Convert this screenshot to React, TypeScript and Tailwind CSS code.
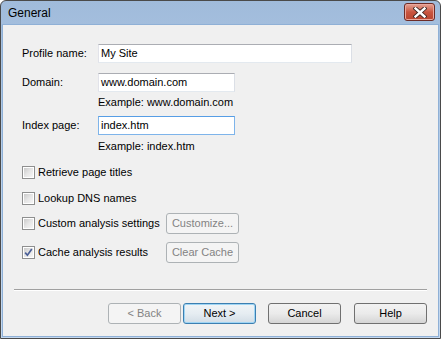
import { type ReactNode } from 'react';

const font = "font-['Liberation_Sans',Arial,sans-serif]";

function TextBox({ value, width, focused }: { value: string; width: number; focused?: boolean }) {
  return (
    <div
      style={{ width }}
      className={`flex h-[19px] items-center bg-white px-[2px] text-[11px] text-black ${
        focused
          ? 'border border-[#7eb4ea] border-t-[#569de5]'
          : 'border border-[#e3e9ef] border-t-[#abadb3] border-l-[#e2e3ea] border-r-[#dbdfe6]'
      }`}
    >
      {value}
    </div>
  );
}

function Field({ label, children }: { label: string; children: ReactNode }) {
  return (
    <div className="flex items-center">
      <span className="w-[76px] text-[11px] text-black">{label}</span>
      {children}
    </div>
  );
}

function CheckBox({ label, checked }: { label: string; checked?: boolean }) {
  return (
    <div className="flex w-[144px] items-center gap-[3px]">
      <span className="flex h-[13px] w-[13px] items-center justify-center border border-[#8e8f8f] bg-white p-[1px]">
        <span className="relative flex h-full w-full items-center justify-center bg-linear-to-br from-[#cbcbcb] via-[#e6e6e6] to-[#f6f6f6]">
          {checked && (
            <svg width="9" height="9" viewBox="0 0 9 9" className="absolute">
              <path d="M1.2 4.6 L3.4 7.2 L7.8 1" fill="none" stroke="#4a5f97" strokeWidth="1.7" />
            </svg>
          )}
        </span>
      </span>
      <span className="text-[11px] text-black">{label}</span>
    </div>
  );
}

function Button({ children, disabled, primary }: { children: ReactNode; disabled?: boolean; primary?: boolean }) {
  let cls = 'border-[#707070] bg-linear-to-b from-[#f2f2f2] via-[#ebebeb] to-[#d5d5d5] text-black';
  if (disabled) cls = 'border-[#adb2b5] bg-[#f4f4f4] text-[#838383]';
  if (primary)
    cls =
      'border-[#3c7fb1] bg-linear-to-b from-[#f0f4f7] via-[#e6edf2] to-[#d2dde6] text-black shadow-[inset_0_0_0_1px_#9fd5f4]';
  return (
    <div className={`flex h-[21px] w-[73px] items-center justify-center rounded-[3px] border text-[11px] ${cls}`}>
      {children}
    </div>
  );
}

export default function App() {
  return (
    <div className={`${font} h-[339px] w-[441px] bg-white`}>
      <div className="flex h-full w-full flex-col rounded-t-[6px] border border-[#4a4a4a] bg-linear-to-b from-[#a0bbdb] via-[#b9d0ea] to-[#c4d8ef] px-[1px] pb-[1px]">
        <div className="flex h-[23px] items-center justify-between pl-[6px] pr-[4px]">
          <span className="text-[12px] text-black">General</span>
          <div className="mt-[-1px] flex h-[18px] w-[31px] items-center justify-center rounded-[3px] border border-[#6d2b26] bg-linear-to-b from-[#e3a397] via-[#c9553f] to-[#b8442f] shadow-[inset_0_0_0_1px_#eaa89d]">
            <svg width="14" height="11" viewBox="0 0 14 11">
              <path d="M2.5 1.5 L11.5 9.5 M11.5 1.5 L2.5 9.5" stroke="#3a2420" strokeWidth="4.2" strokeLinecap="square" />
              <path d="M2.5 1.5 L11.5 9.5 M11.5 1.5 L2.5 9.5" stroke="#ffffff" strokeWidth="2.4" strokeLinecap="square" />
            </svg>
          </div>
        </div>
        <div className="flex flex-1 flex-col border border-[#8fb0d6] bg-[#f0f0f0] pt-[19px]">
          <div className="flex flex-col pl-[19px]">
            <Field label="Profile name:">
              <TextBox value="My Site" width={254} />
            </Field>
            <div className="mt-[10px]">
              <Field label="Domain:">
                <TextBox value="www.domain.com" width={137} />
              </Field>
            </div>
            <p className="mt-[4px] h-[13px] pl-[76px] text-[11px] leading-[13px] text-black">Example: www.domain.com</p>
            <div className="mt-[7px]">
              <Field label="Index page:">
                <TextBox value="index.htm" width={137} focused />
              </Field>
            </div>
            <p className="mt-[5px] h-[13px] pl-[76px] text-[11px] leading-[13px] text-black">Example: index.htm</p>

            <div className="mt-[13px] flex h-[13px] items-center">
              <CheckBox label="Retrieve page titles" />
            </div>
            <div className="mt-[13px] flex h-[13px] items-center">
              <CheckBox label="Lookup DNS names" />
            </div>
            <div className="mt-[8px] flex h-[21px] items-center">
              <CheckBox label="Custom analysis settings" />
              <Button disabled>Customize...</Button>
            </div>
            <div className="mt-[8px] flex h-[21px] items-center">
              <CheckBox label="Cache analysis results" checked />
              <Button disabled>Clear Cache</Button>
            </div>
          </div>

          <div className="mx-[11px] mt-[26px] border-t border-b border-t-[#a0a0a0] border-b-white" />

          <div className="mt-[12px] flex justify-end pr-[11px]">
            <Button disabled>&lt; Back</Button>
            <div className="ml-[2px]">
              <Button primary>Next &gt;</Button>
            </div>
            <div className="ml-[12px]">
              <Button>Cancel</Button>
            </div>
            <div className="ml-[13px]">
              <Button>Help</Button>
            </div>
          </div>
        </div>
      </div>
    </div>
  );
}
